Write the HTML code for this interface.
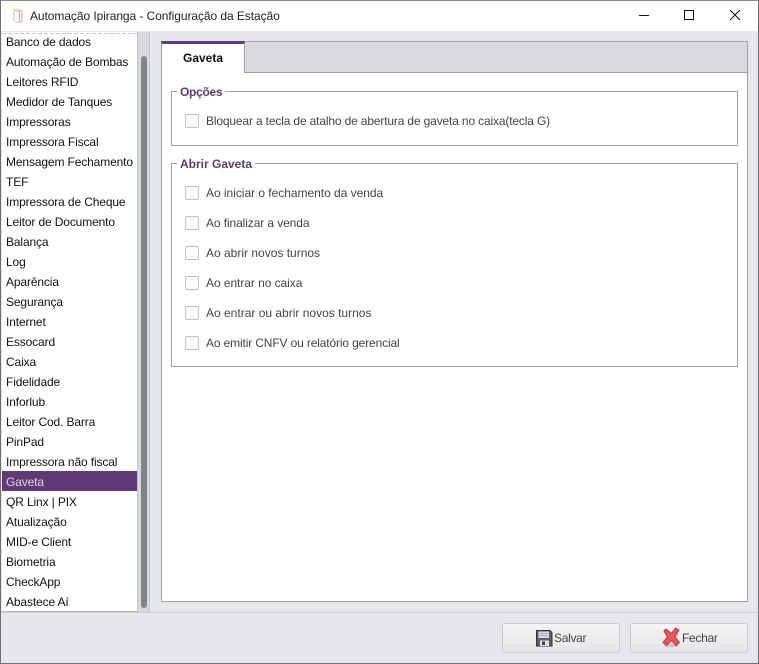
<!DOCTYPE html>
<html><head><meta charset="utf-8">
<style>
html,body{margin:0;padding:0}
body{width:759px;height:664px;position:relative;overflow:hidden;background:#e6e7eb;font-family:"Liberation Sans",sans-serif;font-size:12px;color:#1a1a1a}
div,span{position:absolute;box-sizing:border-box;white-space:nowrap}
.it{left:6px;height:20px;line-height:20px;color:#111;letter-spacing:-.13px}
.cb{left:185px;width:14px;height:14px;border:1px solid #c2c2c2;border-radius:2px;background:#fafafa}
.lb{left:206px;height:20px;line-height:20px;color:#444}
.gb{left:171px;width:567px;border:1px solid #a0a0a0}
.lg{left:177px;background:#fff;padding:0 3px;font-weight:bold;color:#5f3a78;height:14px;line-height:14px}
.btn{top:623px;width:118px;height:30px;border:1px solid #c8cacd;border-radius:3px;background:linear-gradient(#f4f4f5,#e4e5e8)}
.bt{top:623px;height:30px;line-height:31px;color:#444;font-size:12px;letter-spacing:-.3px}
</style></head><body>
<div style="left:0;top:0;width:759px;height:664px;border:1px solid #6f6f6f;border-top-color:#8a8a8a;z-index:9"></div>
<div style="left:1px;top:1px;width:757px;height:30px;background:#fff"></div>
<svg style="position:absolute;left:12px;top:8px" width="12" height="16" viewBox="0 0 12 16"><path d="M1 1h6v3H1z" fill="#f6d98c"/><path d="M1 4h2v10H1z" fill="#e4d8f0"/><path d="M7.500 2.500h2.500v11.500H7.500z" fill="none" stroke="#c4aede"/><path d="M3 14h5v1H3z" fill="#d3c3e6"/></svg>
<div style="left:30px;top:6px;height:20px;line-height:20px;font-size:12px;color:#222;letter-spacing:-.07px">Automação Ipiranga - Configuração da Estação</div>
<svg style="position:absolute;left:630px;top:5px" width="120" height="20" viewBox="0 0 120 20" fill="none" stroke="#111"><path d="M9 10.500h10"/><rect x="54.500" y="5.500" width="9" height="9"/><path d="M100 5l10 10M110 5l-10 10"/></svg>

<div style="left:2px;top:32px;width:136px;height:580px;background:#fff;border-right:1px solid #c0c1c4;border-bottom:1px solid #b5b5b5"></div>
<div style="left:2px;top:33px;width:135px;height:1px;background:repeating-linear-gradient(90deg,#c9c9c9 0 4px,#fff 4px 6px)"></div>
<div style="left:138px;top:32px;width:12px;height:580px;background:#d8d9dc;border-right:1px solid #c4c5c8"></div>
<div style="left:141px;top:56px;width:6px;height:552px;background:#808483;border-radius:3px"></div>
<div style="left:2px;top:471px;width:135px;height:20px;background:#613b78"></div>
<div class="it" style="top:32px">Banco de dados</div>
<div class="it" style="top:52px">Automação de Bombas</div>
<div class="it" style="top:72px">Leitores RFID</div>
<div class="it" style="top:92px">Medidor de Tanques</div>
<div class="it" style="top:112px">Impressoras</div>
<div class="it" style="top:132px">Impressora Fiscal</div>
<div class="it" style="top:152px">Mensagem Fechamento</div>
<div class="it" style="top:172px">TEF</div>
<div class="it" style="top:192px">Impressora de Cheque</div>
<div class="it" style="top:212px">Leitor de Documento</div>
<div class="it" style="top:232px">Balança</div>
<div class="it" style="top:252px">Log</div>
<div class="it" style="top:272px">Aparência</div>
<div class="it" style="top:292px">Segurança</div>
<div class="it" style="top:312px">Internet</div>
<div class="it" style="top:332px">Essocard</div>
<div class="it" style="top:352px">Caixa</div>
<div class="it" style="top:372px">Fidelidade</div>
<div class="it" style="top:392px">Inforlub</div>
<div class="it" style="top:412px">Leitor Cod. Barra</div>
<div class="it" style="top:432px">PinPad</div>
<div class="it" style="top:452px">Impressora não fiscal</div>
<div class="it" style="top:472px;color:#dcd3e4">Gaveta</div>
<div class="it" style="top:492px">QR Linx | PIX</div>
<div class="it" style="top:512px">Atualização</div>
<div class="it" style="top:532px">MID-e Client</div>
<div class="it" style="top:552px">Biometria</div>
<div class="it" style="top:572px">CheckApp</div>
<div class="it" style="top:592px">Abastece Aí</div>

<div style="left:161px;top:41px;width:587px;height:561px;background:#fff;border:1px solid #a0a0a0"></div>
<div style="left:162px;top:42px;width:585px;height:31px;background:#d8d9dd;border-bottom:1px solid #a0a0a0"></div>
<div style="left:161px;top:41px;width:84px;height:32px;background:#fff;border-right:1px solid #a0a0a0;border-left:1px solid #a0a0a0;border-top:3px solid #5f3a78"></div>
<div style="left:183px;top:48px;height:20px;line-height:20px;font-weight:bold;color:#111">Gaveta</div>

<div class="gb" style="top:91px;height:55px"></div>
<div class="lg" style="top:85px;letter-spacing:-.3px">Opções</div>
<div class="cb" style="top:114px"></div>
<div class="lb" style="top:111px;letter-spacing:-.155px">Bloquear a tecla de atalho de abertura de gaveta no caixa(tecla G)</div>

<div class="gb" style="top:163px;height:204px"></div>
<div class="lg" style="top:157px">Abrir Gaveta</div>
<div class="cb" style="top:186px"></div><div class="lb" style="top:183px;letter-spacing:-.03px">Ao iniciar o fechamento da venda</div>
<div class="cb" style="top:216px"></div><div class="lb" style="top:213px;letter-spacing:-.1px">Ao finalizar a venda</div>
<div class="cb" style="top:246px"></div><div class="lb" style="top:243px">Ao abrir novos turnos</div>
<div class="cb" style="top:276px"></div><div class="lb" style="top:273px;letter-spacing:-.06px">Ao entrar no caixa</div>
<div class="cb" style="top:306px"></div><div class="lb" style="top:303px">Ao entrar ou abrir novos turnos</div>
<div class="cb" style="top:336px"></div><div class="lb" style="top:333px;letter-spacing:-.14px">Ao emitir CNFV ou relatório gerencial</div>

<div style="left:1px;top:612px;width:757px;height:1px;background:#cfd0d3"></div>
<div class="btn" style="left:502px"></div>
<svg style="position:absolute;left:536px;top:630px" width="17" height="17" viewBox="0 0 17 17"><path d="M.5.5h13.500l2 2v13.500H.5z" fill="#5a6066" stroke="#2f3236"/><path d="M2.500 1.500h10.500v6.500H2.500z" fill="#d5dbe0"/><path d="M4 3.500h8M4 5.500h8" stroke="#a7b0b8"/><path d="M4 10.500h9v5.500H4z" fill="#dfe1e3"/><path d="M6 11.500h3v3.500H6z" fill="#3b3f44"/></svg>
<div class="bt" style="left:554px">Salvar</div>
<div class="btn" style="left:630px"></div>
<svg style="position:absolute;left:662px;top:627px" width="19" height="21" viewBox="0 0 19 21"><ellipse cx="9.500" cy="18.500" rx="8" ry="1.500" fill="#c6c6c6"/><path d="M4 2l5.500 4.500L13.500 1l3.500 2-4 7 4.500 5.500-3.500 3-4.500-5-5 5L1 15.500l4.500-5.500L2 4z" fill="#e9565e" stroke="#c9353e"/></svg>
<div class="bt" style="left:682px">Fechar</div>
</body></html>
